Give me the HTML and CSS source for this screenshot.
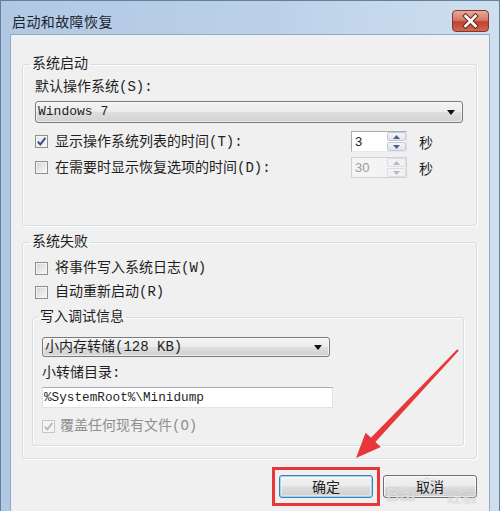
FILE: index.html
```html
<!DOCTYPE html>
<html lang="zh-CN">
<head>
<meta charset="utf-8">
<title>启动和故障恢复</title>
<link rel="stylesheet" href="styles.css">
</head>
<body>
<div class="window">
  <div class="titlebar">
    <span class="title">启动和故障恢复</span>
    <span class="close">
      <svg width="37" height="22" viewBox="0 0 37 22">
        <path d="M13.5 6 L23.5 16 M23.5 6 L13.5 16" stroke="#6a2b22" stroke-width="4.6" stroke-linecap="square"/>
        <path d="M13.5 6 L23.5 16 M23.5 6 L13.5 16" stroke="#ffffff" stroke-width="2.6" stroke-linecap="square"/>
      </svg>
    </span>
  </div>
  <div class="client">
    <fieldset class="group g1">
      <legend>系统启动</legend>
      <div class="label l1">默认操作系统(S):</div>
      <div class="combo combo-os"><span class="combo-text">Windows 7</span><span class="arrow"></span></div>
      <div class="row r1">
        <span class="check checked"><svg width="11" height="11" viewBox="0 0 11 11"><path d="M1.8 5.6 L4.3 8.4 L9.4 1.8" fill="none" stroke="#3b4d80" stroke-width="1.9"/></svg></span>
        <span class="row-text">显示操作系统列表的时间(T):</span>
        <span class="spin">
          <span class="spin-val">3</span>
          <span class="spin-btns">
            <span class="spin-btn"><svg width="7" height="4" viewBox="0 0 7 4"><path d="M0 4 L3.5 0 L7 4Z" fill="#4d6089"/></svg></span>
            <span class="spin-btn"><svg width="7" height="4" viewBox="0 0 7 4"><path d="M0 0 L3.5 4 L7 0Z" fill="#4d6089"/></svg></span>
          </span>
        </span>
        <span class="unit">秒</span>
      </div>
      <div class="row r2">
        <span class="check"></span>
        <span class="row-text">在需要时显示恢复选项的时间(D):</span>
        <span class="spin disabled">
          <span class="spin-val">30</span>
          <span class="spin-btns">
            <span class="spin-btn"><svg width="7" height="4" viewBox="0 0 7 4"><path d="M0 4 L3.5 0 L7 4Z" fill="#b3b8c0"/></svg></span>
            <span class="spin-btn"><svg width="7" height="4" viewBox="0 0 7 4"><path d="M0 0 L3.5 4 L7 0Z" fill="#b3b8c0"/></svg></span>
          </span>
        </span>
        <span class="unit">秒</span>
      </div>
    </fieldset>

    <fieldset class="group g2">
      <legend>系统失败</legend>
      <div class="row r3">
        <span class="check"></span>
        <span class="row-text">将事件写入系统日志(W)</span>
      </div>
      <div class="row r4">
        <span class="check"></span>
        <span class="row-text">自动重新启动(R)</span>
      </div>
      <fieldset class="group inner">
        <legend>写入调试信息</legend>
        <div class="combo combo-dump"><span class="combo-text">小内存转储(128 KB)</span><span class="arrow"></span></div>
        <div class="label l2">小转储目录:</div>
        <div class="textbox"><span class="mono">%SystemRoot%\Minidump</span></div>
        <div class="row r5">
          <span class="check checked dis"><svg width="11" height="11" viewBox="0 0 11 11"><path d="M1.8 5.6 L4.3 8.4 L9.4 1.8" fill="none" stroke="#b9bcc0" stroke-width="1.9"/></svg></span>
          <span class="row-text dis-text">覆盖任何现有文件(O)</span>
        </div>
      </fieldset>
    </fieldset>

    <div class="buttons">
      <span class="btn default">确定</span>
      <span class="btn">取消</span>
    </div>
  </div>

  <div class="redbox"></div>
  <div class="wm-bai">Bai</div>
  <div class="wm-jy">经验</div>
  <svg class="annot" width="500" height="511" viewBox="0 0 500 511">
    <g fill="rgba(255,255,255,0.6)" stroke="rgba(140,140,140,0.45)" stroke-width="0.8">
      <circle cx="421" cy="482" r="2"/>
      <circle cx="427" cy="480" r="2"/>
      <circle cx="433" cy="482" r="2"/>
    </g>
    <polygon points="458.7,350.7 375.4,441.9 380.8,447.0 356,458 365.6,432.7 371.0,437.7 457.3,349.3" fill="#e8373b"/>
  </svg>
</div>
</body>
</html>
```

FILE: styles.css
```css
html, body {
  margin: 0;
  padding: 0;
  width: 500px;
  height: 511px;
  overflow: hidden;
  background: #b9cfe8;
}

.window {
  position: relative;
  box-sizing: border-box;
  width: 500px;
  height: 511px;
  border: 1px solid #62809f;
  border-bottom: none;
  padding: 0 9px;
  display: flex;
  flex-direction: column;
  background: linear-gradient(to right, #b1c8e3 0%, #bcd1e9 55%, #cfdfef 100%);
  font-family: "Liberation Mono", "Noto Sans CJK SC", monospace;
  font-size: 14px;
  color: #1e1e1e;
}

.titlebar {
  height: 33px;
  flex: none;
  display: flex;
  justify-content: space-between;
  align-items: flex-start;
}

.title {
  margin: 10px 0 0 2px;
  font-family: "Noto Sans CJK SC", sans-serif;
  font-size: 14px;
  letter-spacing: 0.4px;
  line-height: 20px;
  color: #1b2430;
}

.close {
  margin: 9px 1px 0 0;
  width: 37px;
  height: 22px;
  box-sizing: border-box;
  border: 1px solid #7c3a30;
  border-radius: 4px;
  background: linear-gradient(to bottom, #e9a99c 0%, #d47a66 45%, #c1432f 55%, #d0674d 100%);
  display: flex;
}
.close svg { display: block; margin: -1px; }

.client {
  flex: 1;
  background: #f0f0f0;
  border: 1px solid #8fabcc;
  border-bottom: none;
  padding: 0 12px 0 11px;
  display: flex;
  flex-direction: column;
}

.group {
  margin: 0;
  border: 1px solid #d5dfe5;
  border-radius: 3px;
  box-shadow: 1px 1px 0 #ffffff, inset 1px 1px 0 #fbfbfb;
  min-width: 0;
}
.group legend {
  padding: 0 2px;
  margin-left: -5px;
  line-height: 18px;
  font-size: 14px;
}

.g1 {
  margin-top: 20px;
  padding: 0 13px 47px 12px;
}
.g2 {
  margin-top: 7px;
  padding: 0 13px 12px 12px;
}
.inner {
  margin: 7px -1px 0 -3px;
  padding: 0 9px 10px 9px;
}
.inner legend { margin-left: -4px; }

.label {
  line-height: 18px;
}
.l1 { margin-top: 5px; }
.l2 { margin-top: 7px; }

.combo {
  box-sizing: border-box;
  border: 1px solid #7a7a7a;
  border-radius: 3px;
  background: linear-gradient(to bottom, #f3f3f3 0%, #ececec 48%, #dedede 52%, #d2d2d2 100%);
  display: flex;
  align-items: center;
  justify-content: space-between;
  padding: 0 7px 0 2px;
  box-shadow: inset 0 0 0 1px rgba(255,255,255,0.6);
}
.combo-os {
  margin-top: 5px;
  height: 22px;
}
.combo-dump {
  margin-top: 11px;
  height: 20px;
  width: 288px;
}
.combo-text {
  line-height: 18px;
  white-space: nowrap;
}
.combo-os .combo-text { font-size: 13px; }
.arrow {
  width: 0;
  height: 0;
  border-left: 4px solid transparent;
  border-right: 4px solid transparent;
  border-top: 5px solid #101010;
}

.row {
  display: flex;
  align-items: center;
  height: 18px;
}
.r1 { margin-top: 8px; height: 21px; }
.r2 { margin-top: 5px; height: 21px; }
.r3 { margin-top: 8px; }
.r4 { margin-top: 6px; }
.r5 { margin-top: 9px; }

.check {
  box-sizing: border-box;
  width: 13px;
  height: 13px;
  border: 1px solid #8f8f8f;
  background: linear-gradient(135deg, #cfd1d5 0%, #e6e7e9 50%, #f8f8f8 100%);
  box-shadow: inset 0 0 0 1px #f4f4f4;
  flex: none;
  display: flex;
  align-items: center;
  justify-content: center;
}
.check.checked {
  background: linear-gradient(135deg, #e4e6ea 0%, #f6f6f7 100%);
}
.check.dis {
  border-color: #c5c5c5;
  background: #f4f4f4;
}
.check svg { display: block; }

.row-text {
  margin-left: 7px;
  line-height: 18px;
  white-space: nowrap;
}
.r5 .row-text { margin-left: 5px; }
.dis-text { color: #8f8f8f; }

.spin {
  margin-left: auto;
  box-sizing: border-box;
  width: 56px;
  height: 21px;
  border: 1px solid #abadb3;
  border-right-color: #dbdfe6;
  border-bottom-color: #e3e9ef;
  background: #ffffff;
  display: flex;
}
.spin.disabled { background: #f4f4f4; border-color: #cfd1d5; }
.spin-val {
  flex: 1;
  padding-left: 3px;
  font-family: "Liberation Sans", sans-serif;
  font-size: 13px;
  line-height: 19px;
}
.spin.disabled .spin-val { color: #9c9c9c; }
.spin-btns {
  width: 19px;
  display: flex;
  flex-direction: column;
  gap: 1px;
}
.spin-btn {
  flex: 1;
  box-sizing: border-box;
  border: 1px solid #c3c9d3;
  border-radius: 2px;
  background: linear-gradient(to bottom, #f5f6f8, #dfe3ea);
  display: flex;
  align-items: center;
  justify-content: center;
}
.spin-btn svg { display: block; }
.spin.disabled .spin-btn { border-color: #dadde2; background: #f2f2f2; }

.unit {
  margin-left: 12px;
  margin-right: 30px;
  line-height: 18px;
  font-family: "Noto Sans CJK SC", sans-serif;
}

.textbox {
  margin-top: 5px;
  box-sizing: border-box;
  width: 291px;
  height: 21px;
  border: 1px solid #e2e3ea;
  border-top-color: #abadb3;
  background: #ffffff;
  padding-left: 1px;
  display: flex;
  align-items: center;
}
.mono {
  font-size: 12.7px;
  white-space: nowrap;
}

.buttons {
  margin-top: 16px;
  display: flex;
  justify-content: flex-end;
  gap: 10px;
}
.btn {
  box-sizing: border-box;
  width: 94px;
  height: 23px;
  border: 1px solid #707070;
  border-radius: 3px;
  background: linear-gradient(to bottom, #f2f2f2 0%, #ebebeb 48%, #dddddd 52%, #cfcfcf 100%);
  box-shadow: inset 0 0 0 1px rgba(255,255,255,0.7);
  font-family: "Noto Sans CJK SC", sans-serif;
  font-size: 14px;
  line-height: 21px;
  text-align: center;
}
.btn.default {
  border-color: #3c7fb1;
  box-shadow: inset 0 0 0 1px #9fd5f4, inset 0 0 0 2px rgba(255,255,255,0.4);
}

.redbox {
  position: absolute;
  left: 271px;
  top: 466px;
  width: 102px;
  height: 33px;
  border: 3px solid #e8373b;
}

.annot {
  position: absolute;
  left: -1px;
  top: -1px;
  pointer-events: none;
}

.wm-bai,
.wm-jy {
  position: absolute;
  color: rgba(255,255,255,0.6);
  text-shadow: 0 0 1px rgba(120,120,120,0.55);
  pointer-events: none;
}
.wm-bai {
  left: 385px;
  top: 483px;
  font-family: "Liberation Sans", sans-serif;
  font-weight: bold;
  font-size: 19px;
  line-height: 22px;
}
.wm-jy {
  left: 446px;
  top: 485px;
  font-family: "Noto Sans CJK SC", sans-serif;
  font-size: 15px;
  line-height: 20px;
}
```
